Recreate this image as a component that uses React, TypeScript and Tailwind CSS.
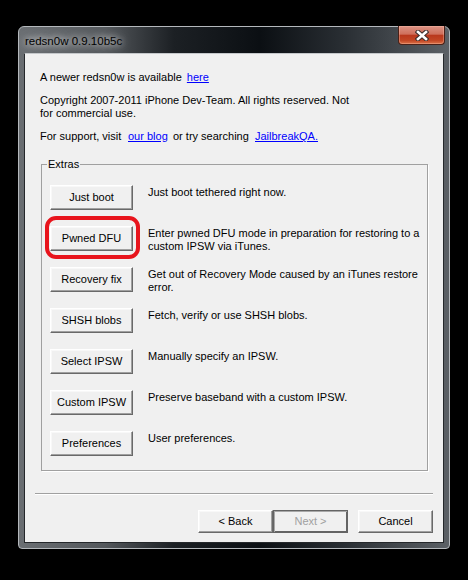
import React from 'react';

type Extra = {
  label: string;
  lines: string[];
  highlight?: boolean;
};

const extras: Extra[] = [
  { label: 'Just boot', lines: ['Just boot tethered right now.'] },
  {
    label: 'Pwned DFU',
    lines: ['Enter pwned DFU mode in preparation for restoring to a', 'custom IPSW via iTunes.'],
    highlight: true,
  },
  {
    label: 'Recovery fix',
    lines: ['Get out of Recovery Mode caused by an iTunes restore', 'error.'],
  },
  { label: 'SHSH blobs', lines: ['Fetch, verify or use SHSH blobs.'] },
  { label: 'Select IPSW', lines: ['Manually specify an IPSW.'] },
  { label: 'Custom IPSW', lines: ['Preserve baseband with a custom IPSW.'] },
  { label: 'Preferences', lines: ['User preferences.'] },
];

// classic 3D push button
function ClassicButton({
  children,
  className = '',
}: {
  children: React.ReactNode;
  className?: string;
}) {
  return (
    <button
      className={`flex items-center justify-center bg-[#f0f0f0] border border-t-white border-l-white border-r-[#696969] border-b-[#696969] shadow-[inset_-1px_-1px_0_#a0a0a0,inset_1px_1px_0_#f8f8f8] text-black leading-[13px] ${className}`}
    >
      {children}
    </button>
  );
}

function CloseGlyph() {
  return (
    <svg width="14" height="11" viewBox="0 0 14 11">
      <path d="M3 2 L11 9 M11 2 L3 9" stroke="#3b2e2c" strokeWidth="4.6" strokeLinecap="square" />
      <path d="M3 2 L11 9 M11 2 L3 9" stroke="#ffffff" strokeWidth="2.6" strokeLinecap="square" />
    </svg>
  );
}

export default function App() {
  return (
    <div className="w-[468px] h-[580px] bg-black pt-[26px] pl-[18px] overflow-hidden font-['Liberation_Sans',Arial,sans-serif] text-[11px] leading-[13px] text-black">
      {/* Window frame */}
      <div className="w-[432px] h-[523px] flex flex-col rounded-t-[6px] rounded-b-[4px] border border-[#b4b8bc] bg-[linear-gradient(90deg,#6a6e72_0%,#54585c_20%,#1c2024_36%,#0b0f13_56%,#2a2f34_76%,#5c6166_100%)]">
        {/* Title bar */}
        <div className="h-[26px] flex items-start">
          <span className="pl-[6px] pt-[8px] text-[11.5px] leading-[13px] text-black [text-shadow:0_0_6px_rgba(255,255,255,0.9),0_0_12px_rgba(255,255,255,0.7)]">
            redsn0w 0.9.10b5c
          </span>
          <div className="ml-auto mr-[4px] -mt-[1px] w-[47px] h-[19px] flex items-center justify-center rounded-b-[4px] border border-[#4a2118] border-t-0 bg-[linear-gradient(180deg,#dc9384_0%,#cf6f5b_45%,#b9381d_52%,#c24624_80%,#db7248_100%)] shadow-[inset_0_0_0_1px_rgba(255,200,180,0.35)]">
            <CloseGlyph />
          </div>
        </div>

        {/* Client area */}
        <div className="flex-1 px-[5px] pb-[5px] flex">
          <div className="flex-1 flex flex-col bg-[#f0f0f0] border border-[#25282b] border-t-[#c4c7ca]">
            <div className="pl-[15px] pt-[17px]">
              <div className="flex">
                <span>A newer redsn0w is available</span>
                <span className="ml-[5px] text-[#0000ff] underline">here</span>
              </div>
              <div className="mt-[10px]">
                Copyright 2007-2011 iPhone Dev-Team. All rights reserved. Not
                <br />
                for commercial use.
              </div>
              <div className="mt-[10px] flex whitespace-nowrap">
                <span className="w-[88px]">For support, visit</span>
                <span className="w-[45px] text-[#0000ff] underline">our blog</span>
                <span className="w-[82px]">or try searching</span>
                <span className="text-[#0000ff] underline">JailbreakQA.</span>
              </div>
            </div>

            {/* Extras group box */}
            <fieldset className="ml-[16px] mt-[15px] w-[387px] p-0 border border-[#a0a0a0] shadow-[1px_1px_0_#ffffff]">
              <legend className="ml-[5px] px-[1px] leading-[13px]">Extras</legend>
              <div className="pl-[8px] pt-[14px] pb-[14px] flex flex-col gap-[16px]">
                {extras.map((item) => (
                  <div key={item.label} className="relative h-[25px] flex items-start">
                    <ClassicButton className="w-[83px] h-[25px] shrink-0">{item.label}</ClassicButton>
                    <div className="ml-[15px] pt-[1px] whitespace-nowrap">
                      {item.lines.map((line) => (
                        <div key={line}>{line}</div>
                      ))}
                    </div>
                    {item.highlight && (
                      <div className="absolute left-[-5px] top-[-10px] w-[95px] h-[43px] rounded-[11px] border-[4px] border-[#e8141c] pointer-events-none" />
                    )}
                  </div>
                ))}
              </div>
            </fieldset>

            {/* Separator */}
            <div className="ml-[10px] mt-[22px] w-[398px] border-t border-t-[#a0a0a0] border-b border-b-white" />

            {/* Wizard buttons */}
            <div className="mt-[15px] pr-[10px] flex justify-end">
              <ClassicButton className="w-[75px] h-[23px]">&lt; Back</ClassicButton>
              <div className="w-[75px] h-[23px] flex items-center justify-center bg-[#f0f0f0] border border-[#646464] shadow-[inset_1px_1px_0_#a8a8a8,inset_-1px_-1px_0_#646464] text-[#a0a0a0]">
                Next &gt;
              </div>
              <ClassicButton className="ml-[10px] w-[75px] h-[23px]">Cancel</ClassicButton>
            </div>
          </div>
        </div>
      </div>
    </div>
  );
}
